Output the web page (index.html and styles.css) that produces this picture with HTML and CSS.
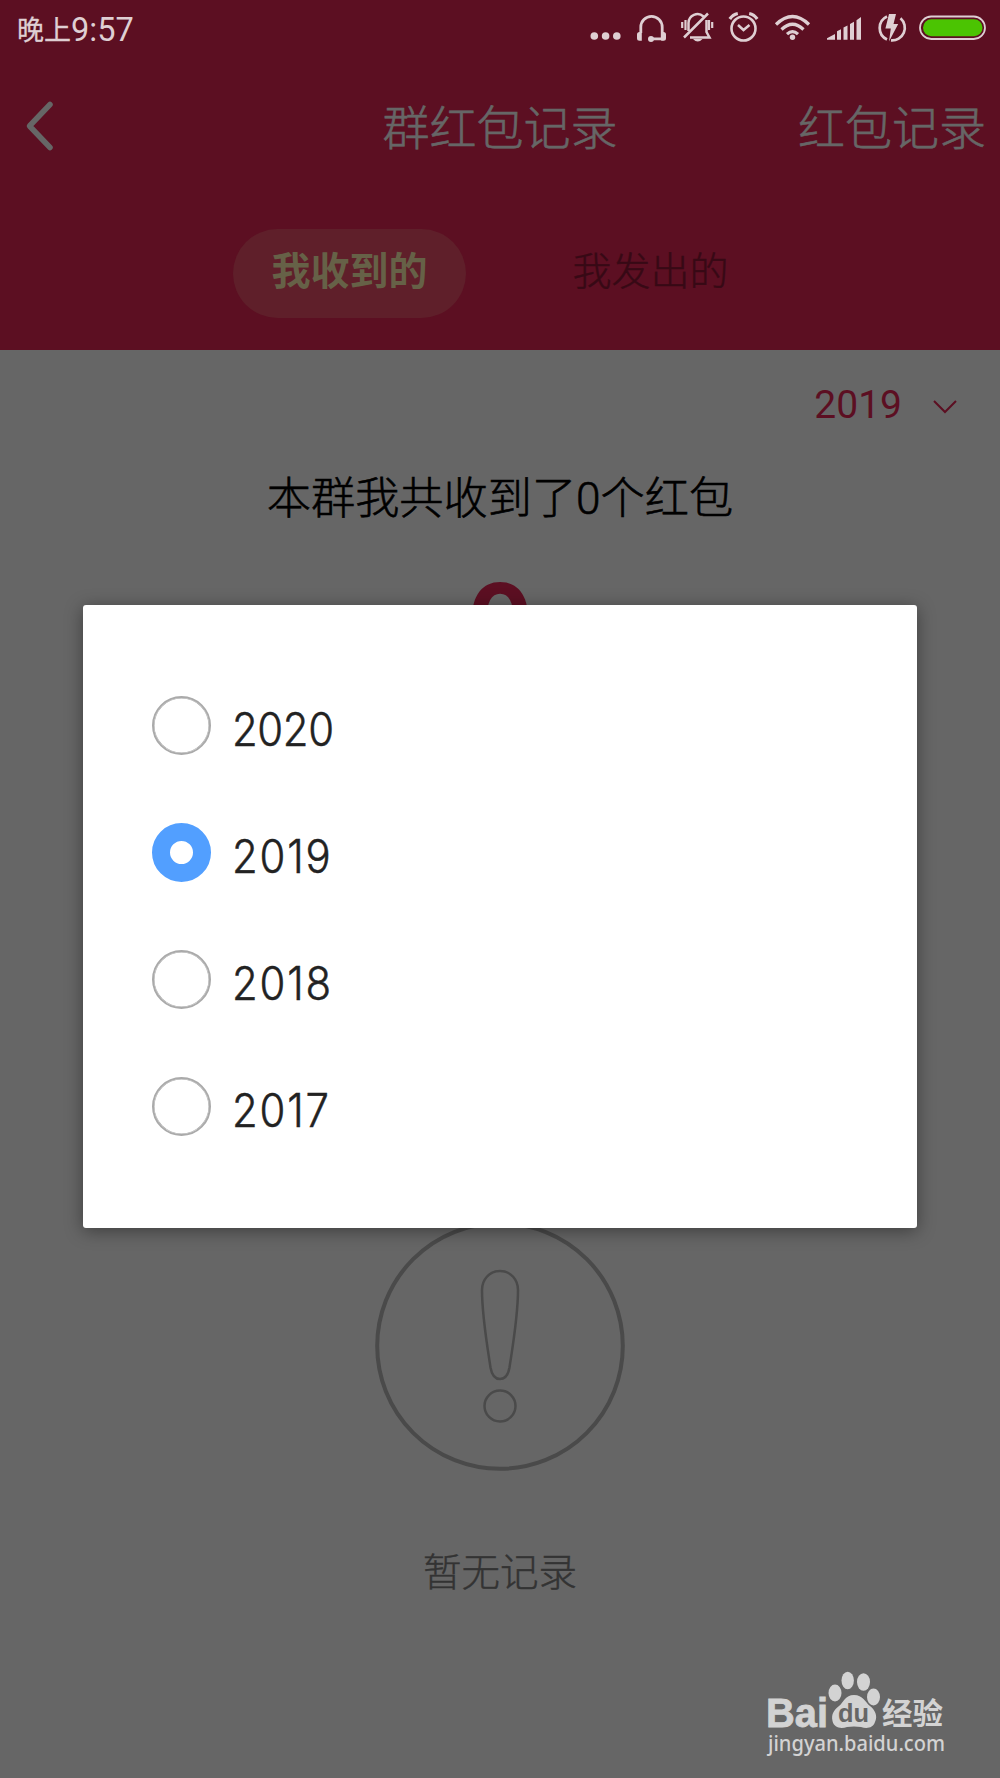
FILE: index.html
```html
<!DOCTYPE html>
<html lang="zh-CN">
<head>
<meta charset="utf-8">
<title>群红包记录</title>
<link rel="stylesheet" href="styles.css">
</head>
<body>
<div class="screen">
  <header class="header">
    <div class="status">
      <div class="clock"><span class="period">晚上</span><span class="time">9:57</span></div>
      <div class="status-icons">
        <svg width="44" height="60" viewBox="586 0 44 60"><g class="fill"><circle cx="594.3" cy="36" r="3.8"/><circle cx="605.6" cy="36" r="3.8"/><circle cx="616.8" cy="36" r="3.8"/></g></svg>
        <svg width="44" height="60" viewBox="630 0 44 60"><path class="line" d="M640.8 33V27a10.7 10.7 0 0 1 21.4 0V38.800H652" stroke-width="2.800"/><g class="fill"><path d="M641.8 32v8.700h-2.300a2.500 2.500 0 0 1-2.500-2.500v-3.700a2.500 2.500 0 0 1 2.500-2.500zM661.2 32v8.700h2.300a2.500 2.500 0 0 0 2.500-2.500v-3.700a2.500 2.500 0 0 0-2.500-2.500z"/><circle cx="651" cy="39" r="3"/></g></svg>
        <svg width="46" height="60" viewBox="674 0 46 60"><g class="line" stroke-width="2.500"><path d="M688.500 31V23a9 9 0 0 1 15-6.500M706.500 20V32l3 5.500H690M684 37.500L708 13.500" /><path d="M682.200 22v6M685.500 20v10M709 20v10M712.200 22v6" stroke-width="2.200"/></g><path class="fill" d="M693 39h9.500q-4.700 5-9.500 0z"/></svg>
        <svg width="48" height="60" viewBox="720 0 48 60"><g class="line"><circle cx="743.500" cy="28.500" r="12" stroke-width="2.600"/><path d="M738 25l5.500 5 6-5" stroke-width="2.500"/><path d="M729.800 19q3-4.500 8-5.500M757.200 19q-3-4.500-8-5.500" stroke-width="3.200"/></g></svg>
        <svg width="52" height="60" viewBox="768 0 52 60"><g class="line" stroke-width="3.200"><path d="M776 24.500q16.500-16 33 0M781.500 29.500q11-10.500 22 0M787 34.200q5.500-5.200 11 0"/></g><circle class="fill" cx="792.500" cy="37.300" r="2.700"/></svg>
        <svg width="50" height="60" viewBox="820 0 50 60"><path class="fill" d="M827 39.800v-1.500l8-4.300v5.800zM837 31.300l4-2v10.500h-4zM843.500 27.500l4-2v14.300h-4zM850 24l4-2.200v18h-4zM856.500 20.300l4.500-3.300v22.800h-4.500z"/></svg>
        <svg width="42" height="60" viewBox="870 0 42 60"><path class="line" stroke-width="2.700" d="M887 16.500a12.700 12.700 0 0 0 0 23M891 40.400a12.700 12.700 0 0 0 9.500-22.200"/><path class="fill" d="M889 14h7l-2.500 10h4.700L889 41.500l1.800-13h-5.400z"/></svg>
        <svg width="88" height="60" viewBox="912 0 88 60"><rect class="line" x="920" y="16.500" width="65" height="22.500" rx="11.200" stroke-width="1.800"/><rect x="923" y="19.300" width="59.500" height="17" rx="8.500" fill="#4bc402"/></svg>
      </div>
    </div>
    <nav class="nav">
      <svg class="back" width="64" height="60" viewBox="0 96 64 60"><path d="M50 104.500L29.500 126 50 147.500"/></svg>
      <h1 class="title">群红包记录</h1>
      <span class="history">红包记录</span>
    </nav>
    <div class="tabs">
      <div class="tab active">我收到的</div>
      <div class="tab">我发出的</div>
    </div>
  </header>
  <main class="content">
    <div class="year"><span>2019</span><svg width="26" height="18" viewBox="0 0 26 18"><path d="M2 3L13 14 24 3"/></svg></div>
    <p class="summary">本群我共收到了0个红包</p>
    <div class="count">0</div>
    <div class="empty">
      <svg width="252" height="252" viewBox="-126 -126 252 252"><circle r="122.800" stroke-width="4"/><path stroke-width="2.500" d="M0-75C-11-75-18-66-18-56C-18-30-13-2-9.500 21.500Q-7.500 33 0 33T9.500 21.500C13-2 18-30 18-56C18-66 11-75 0-75Z"/><circle cy="60" r="15.500" stroke-width="2.500"/></svg>
      <p>暂无记录</p>
    </div>
  </main>
  <div class="dialog">
    <div class="option"><i class="radio"></i><span>2020</span></div>
    <div class="option"><i class="radio checked"></i><span class="loose">2019</span></div>
    <div class="option"><i class="radio"></i><span class="loose">2018</span></div>
    <div class="option"><i class="radio"></i><span class="loose">2017</span></div>
  </div>
  <svg class="watermark" width="210" height="110" viewBox="750 1660 210 110">
    <text class="bai" x="766" y="1726.500" textLength="62" lengthAdjust="spacingAndGlyphs">Bai</text>
    <ellipse cx="835" cy="1693" rx="6.500" ry="8.500"/><ellipse cx="847.700" cy="1680.500" rx="6.200" ry="8.800"/><ellipse cx="863.500" cy="1682" rx="6.500" ry="8.700"/><ellipse cx="873.500" cy="1697" rx="6.500" ry="8.500"/>
    <path d="M854 1695C863 1695 865 1702 870 1706C875 1710 878 1716 875 1722C873 1728 867 1729 861 1727Q854 1726 847 1727C841 1729 834 1728 832.500 1721C831 1714 834 1710 839 1706C844 1702 845 1695 854 1695Z"/>
    <text class="du" x="838" y="1722" textLength="31" lengthAdjust="spacingAndGlyphs">du</text>
    <text class="jingyan" x="882" y="1723.500" textLength="61" lengthAdjust="spacingAndGlyphs">经验</text>
    <text class="url" x="768" y="1750.500" textLength="177" lengthAdjust="spacingAndGlyphs">jingyan.baidu.com</text>
  </svg>
</div>
</body>
</html>
```
FILE: styles.css
```css
* { box-sizing: border-box; margin: 0; padding: 0; }
body { font-family: Roboto, "Noto Sans CJK SC", sans-serif; background: #666; }
.screen { position: relative; width: 1000px; height: 1778px; overflow: hidden; background: #666; }
svg { display: block; }

.header { height: 350px; background: #5c0f22; }
.status { display: flex; justify-content: space-between; height: 60px; color: #dfcfd3; }
.clock { display: flex; align-items: center; padding: 0 0 2px 17px; }
.period { padding-bottom: 2px; font-size: 27px; -webkit-text-stroke: .3px; }
.time { padding-top: 1px; font-size: 32.500px; line-height: 60px; }
.status-icons { display: flex; }
.fill { fill: #dfcfd3; }
.line { fill: none; stroke: #dfcfd3; }

.nav { display: grid; grid-template-columns: 1fr auto 1fr; align-items: center; height: 132px; color: #666; font-size: 47px; font-weight: 300; -webkit-text-stroke: .6px; }
.title { padding-top: 6px; font-size: 47px; font-weight: 300; line-height: 60px; }
.history { justify-self: end; padding: 6px 14px 0 0; line-height: 60px; }
.back { fill: none; stroke: #666; stroke-width: 5.500; stroke-linecap: round; stroke-linejoin: round; }

.tabs { display: grid; grid-template-columns: 233px 233px; justify-content: center; column-gap: 68px; padding: 37px 0 0 0; }
.tab { height: 89px; border-radius: 45px; text-align: center; font-size: 39px; line-height: 87px; font-weight: 300; color: #370915; -webkit-text-stroke: .4px; }
.active { background: #5f1f2a; color: #666147; font-weight: 700; -webkit-text-stroke: 0; }

.year { display: flex; justify-content: flex-end; align-items: center; gap: 30px; height: 108px; padding: 1px 42px 0 0; font-size: 39px; color: #5c0f22; }
.year svg { margin-top: 5px; fill: none; stroke: #5c0f22; stroke-width: 2; }
.summary { height: 78px; line-height: 82px; font-size: 44.200px; font-weight: 300; text-align: center; color: #000; -webkit-text-stroke: .6px; }
.count { height: 170px; line-height: 165px; font-family: Inter, sans-serif; font-size: 96px; font-weight: 700; text-align: center; color: #5c0f22; }
.empty { display: flex; flex-direction: column; align-items: center; padding-top: 514px; }
.empty svg { fill: none; stroke: #4a4a4a; }
.empty p { margin-top: 71px; font-size: 38.500px; line-height: 60px; font-weight: 300; color: #333; -webkit-text-stroke: .4px; }

.dialog { position: absolute; left: 83px; top: 605px; width: 834px; height: 623px; padding: 57px 69px; border-radius: 3px; background: #fff; box-shadow: 0 3px 18px rgba(0, 0, 0, .4); }
.option { display: flex; align-items: center; gap: 21px; height: 127px; }
.option span { padding-top: 6px; font-family: Inter, sans-serif; font-size: 46px; font-kerning: none; letter-spacing: -.400px; transform: scaleX(.91); transform-origin: left; color: #222; font-weight: 300; -webkit-text-stroke: .5px; }
.option .loose { letter-spacing: 2px; }
.radio { width: 59px; height: 59px; border: 2px solid #aaa; border-radius: 50%; box-shadow: inset 0 0 0 .500px #aaa; }
.checked { border: 18px solid #529fff; box-shadow: none; }

.watermark { position: absolute; left: 750px; top: 1660px; fill: #d3d3d3; }
.bai { font: 700 40px "Liberation Sans", sans-serif; stroke: #d3d3d3; stroke-width: .800px; }
.du { font: 700 26px "Liberation Sans", sans-serif; fill: #666; }
.jingyan { font: 700 30px "Noto Sans CJK SC", sans-serif; }
.url { font: 500 21px "Noto Sans", sans-serif; }
```
